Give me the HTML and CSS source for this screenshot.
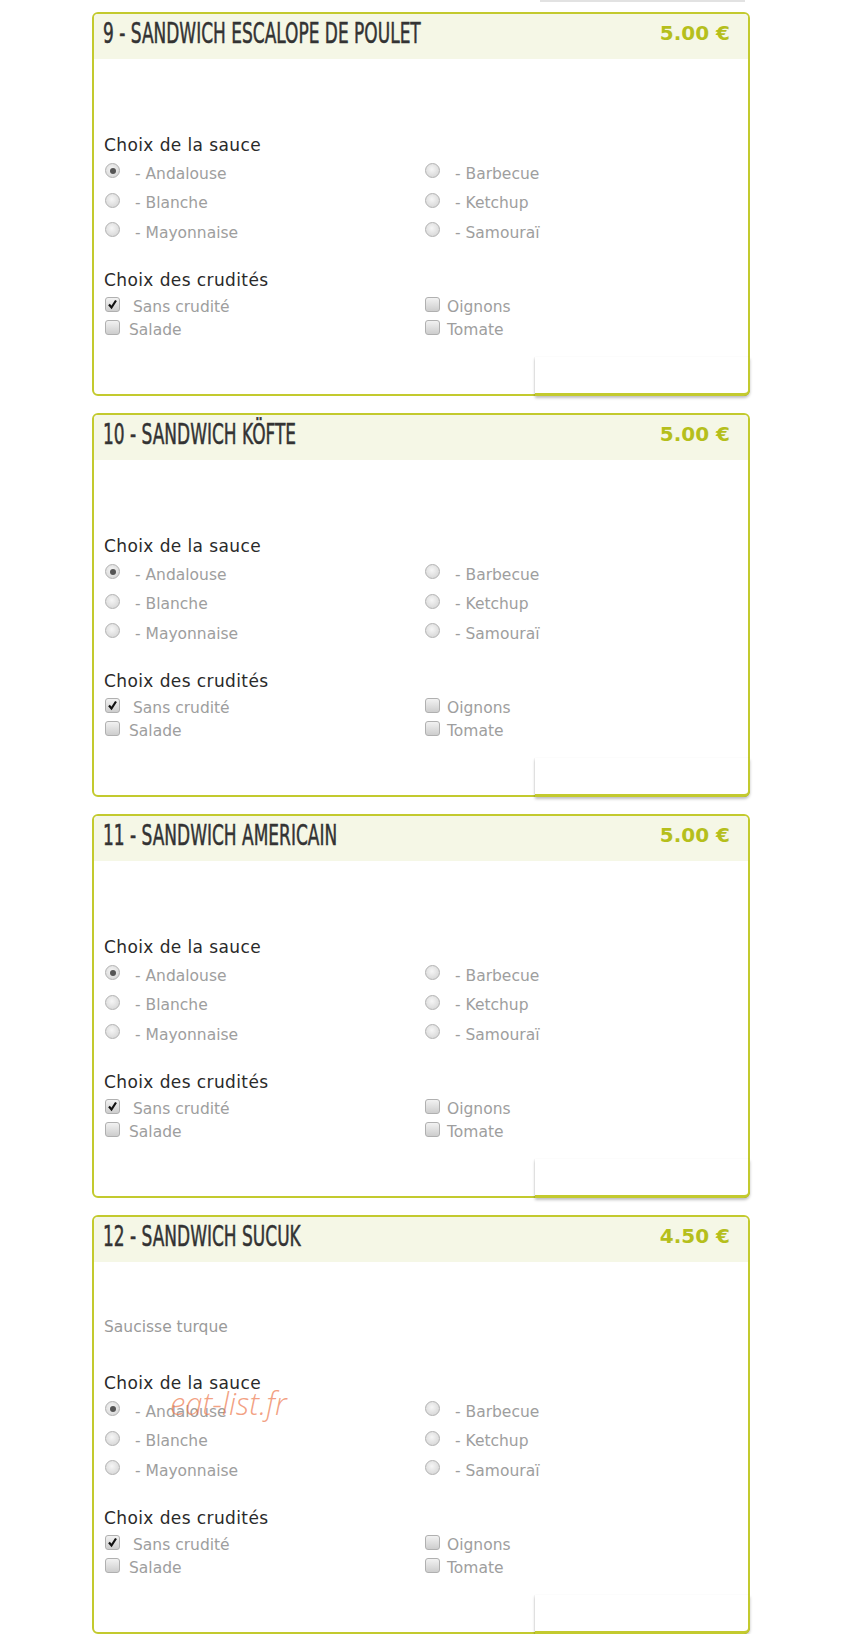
FILE: index.html
```html
<!DOCTYPE html>
<html lang="fr">
<head>
  <meta charset="UTF-8">
  <meta name="viewport" content="width=device-width, initial-scale=1.0">
  <title>Sandwichs</title>
  <link rel="stylesheet" href="styles.css">
</head>
<body>
  <div class="menu">
    <div class="tail"></div>

    <article class="item">
      <header class="item-head">
        <h2 class="item-title">9 - SANDWICH ESCALOPE DE POULET</h2>
        <span class="price">5.00 €</span>
      </header>
      <div class="item-body">
        <div class="group">
          <h3>Choix de la sauce</h3>
          <div class="opts radios">
            <label><span class="radio on"></span>- Andalouse</label>
            <label><span class="radio"></span>- Barbecue</label>
            <label><span class="radio"></span>- Blanche</label>
            <label><span class="radio"></span>- Ketchup</label>
            <label><span class="radio"></span>- Mayonnaise</label>
            <label><span class="radio"></span>- Samouraï</label>
          </div>
        </div>
        <div class="group">
          <h3>Choix des crudités</h3>
          <div class="opts checks">
            <label class="first"><span class="check on"><svg viewBox="0 0 13 13"><path d="M3 6.5 L5.5 9.5 L10 2.5"/></svg></span>Sans crudité</label>
            <label class="first"><span class="check"></span>Oignons</label>
            <label><span class="check"></span>Salade</label>
            <label><span class="check"></span>Tomate</label>
          </div>
        </div>
      </div>
      <div class="cart-box"></div>
    </article>

    <article class="item">
      <header class="item-head">
        <h2 class="item-title">10 - SANDWICH KÖFTE</h2>
        <span class="price">5.00 €</span>
      </header>
      <div class="item-body">
        <div class="group">
          <h3>Choix de la sauce</h3>
          <div class="opts radios">
            <label><span class="radio on"></span>- Andalouse</label>
            <label><span class="radio"></span>- Barbecue</label>
            <label><span class="radio"></span>- Blanche</label>
            <label><span class="radio"></span>- Ketchup</label>
            <label><span class="radio"></span>- Mayonnaise</label>
            <label><span class="radio"></span>- Samouraï</label>
          </div>
        </div>
        <div class="group">
          <h3>Choix des crudités</h3>
          <div class="opts checks">
            <label class="first"><span class="check on"><svg viewBox="0 0 13 13"><path d="M3 6.5 L5.5 9.5 L10 2.5"/></svg></span>Sans crudité</label>
            <label class="first"><span class="check"></span>Oignons</label>
            <label><span class="check"></span>Salade</label>
            <label><span class="check"></span>Tomate</label>
          </div>
        </div>
      </div>
      <div class="cart-box"></div>
    </article>

    <article class="item">
      <header class="item-head">
        <h2 class="item-title">11 - SANDWICH AMERICAIN</h2>
        <span class="price">5.00 €</span>
      </header>
      <div class="item-body">
        <div class="group">
          <h3>Choix de la sauce</h3>
          <div class="opts radios">
            <label><span class="radio on"></span>- Andalouse</label>
            <label><span class="radio"></span>- Barbecue</label>
            <label><span class="radio"></span>- Blanche</label>
            <label><span class="radio"></span>- Ketchup</label>
            <label><span class="radio"></span>- Mayonnaise</label>
            <label><span class="radio"></span>- Samouraï</label>
          </div>
        </div>
        <div class="group">
          <h3>Choix des crudités</h3>
          <div class="opts checks">
            <label class="first"><span class="check on"><svg viewBox="0 0 13 13"><path d="M3 6.5 L5.5 9.5 L10 2.5"/></svg></span>Sans crudité</label>
            <label class="first"><span class="check"></span>Oignons</label>
            <label><span class="check"></span>Salade</label>
            <label><span class="check"></span>Tomate</label>
          </div>
        </div>
      </div>
      <div class="cart-box"></div>
    </article>

    <article class="item">
      <header class="item-head">
        <h2 class="item-title">12 - SANDWICH SUCUK</h2>
        <span class="price">4.50 €</span>
      </header>
      <div class="item-body">
        <p class="desc">Saucisse turque</p>
        <div class="group">
          <h3>Choix de la sauce</h3>
          <div class="opts radios">
            <label><span class="radio on"></span>- Andalouse</label>
            <label><span class="radio"></span>- Barbecue</label>
            <label><span class="radio"></span>- Blanche</label>
            <label><span class="radio"></span>- Ketchup</label>
            <label><span class="radio"></span>- Mayonnaise</label>
            <label><span class="radio"></span>- Samouraï</label>
          </div>
        </div>
        <div class="group">
          <h3>Choix des crudités</h3>
          <div class="opts checks">
            <label class="first"><span class="check on"><svg viewBox="0 0 13 13"><path d="M3 6.5 L5.5 9.5 L10 2.5"/></svg></span>Sans crudité</label>
            <label class="first"><span class="check"></span>Oignons</label>
            <label><span class="check"></span>Salade</label>
            <label><span class="check"></span>Tomate</label>
          </div>
        </div>
      </div>
      <div class="cart-box"></div>
      <span class="watermark">eat-list.fr</span>
    </article>
  </div>
</body>
</html>
```

FILE: styles.css
```css
body {
  margin: 0;
  background: #fff;
  font-family: "DejaVu Sans", sans-serif;
  color: #333;
}

.menu {
  width: 658px;
  margin-left: 92px;
  display: flex;
  flex-direction: column;
  gap: 17.5px;
}

.tail {
  width: 205px;
  height: 2px;
  margin: 0 0 -7.5px 448px;
  background: #e2e2e2;
}

.item {
  position: relative;
  border: 2px solid #c3ca2e;
  border-radius: 6px;
  background: #fff;
}

.item-head {
  display: flex;
  justify-content: space-between;
  align-items: flex-start;
  height: 45px;
  padding: 0 18px 0 9px;
  background: #f5f7e6;
  border-radius: 4px 4px 0 0;
}

.item-title {
  margin: 5px 0 0;
  font-family: "DejaVu Sans Condensed", "DejaVu Sans", sans-serif;
  font-weight: normal;
  font-size: 28px;
  line-height: 30px;
  color: #333;
  -webkit-text-stroke: 0.5px #333;
  transform: scaleX(0.675);
  transform-origin: left center;
  white-space: nowrap;
}

.price {
  margin-top: 7px;
  font-size: 20px;
  font-weight: bold;
  line-height: 24px;
  color: #b5bf1c;
}

.item-body {
  display: flex;
  flex-direction: column;
  padding: 55px 10px 52px;
}

.desc {
  margin: 0 0 15px;
  font-size: 15.5px;
  line-height: 20px;
  color: #9a9a9a;
}

.group h3 {
  margin: 21px 0 0;
  font-size: 17px;
  font-weight: normal;
  letter-spacing: 0.4px;
  line-height: 20px;
  color: #2a2a2a;
}

.group + .group h3 {
  margin-top: 22px;
}

.opts {
  display: grid;
  grid-template-columns: 320px 1fr;
  color: #9e9e9e;
  font-size: 15.5px;
}

.radios {
  margin-top: 4px;
  grid-auto-rows: 29.5px;
}

.checks {
  margin-top: 6px;
  grid-auto-rows: 23px;
}

.opts label {
  display: flex;
  align-items: center;
  white-space: nowrap;
}

.radio {
  width: 15px;
  height: 15px;
  margin: -6px 15px 0 1px;
  border: 1px solid #b2b2b2;
  border-radius: 50%;
  box-sizing: border-box;
  background: radial-gradient(circle at 45% 40%, #f6f6f6, #d0d0d0);
  position: relative;
}

.radio.on::after {
  content: "";
  position: absolute;
  left: 3.5px;
  top: 3.5px;
  width: 6px;
  height: 6px;
  border-radius: 50%;
  background: #555;
}

.check {
  width: 15px;
  height: 15px;
  margin: -6px 9px 0 1px;
  border: 1px solid #b0b0b0;
  border-radius: 3px;
  box-sizing: border-box;
  background: linear-gradient(#f2f2f2, #cdcdcd);
  display: inline-flex;
}

.checks .first .check {
  margin-right: 13px;
}

.checks label:nth-child(2) .check,
.checks label:nth-child(4) .check {
  margin-right: 7px;
}

.check svg {
  width: 13px;
  height: 13px;
}

.check svg path {
  fill: none;
  stroke: #111;
  stroke-width: 2.2;
}

.cart-box {
  position: absolute;
  right: -2px;
  bottom: -2px;
  width: 213px;
  height: 36px;
  background: #fff;
  border-right: 2px solid #c3ca2e;
  border-bottom: 3px solid #c3ca2e;
  border-radius: 0 0 6px 0;
  box-shadow: 0 2px 3px rgba(0, 0, 0, 0.25), -1px 0 1px rgba(0, 0, 0, 0.04);
}

.watermark {
  position: absolute;
  left: 76px;
  top: 165px;
  font-family: "Open Sans", sans-serif;
  font-style: italic;
  font-weight: 300;
  font-size: 31px;
  color: rgba(238, 130, 90, 0.75);
}
```
